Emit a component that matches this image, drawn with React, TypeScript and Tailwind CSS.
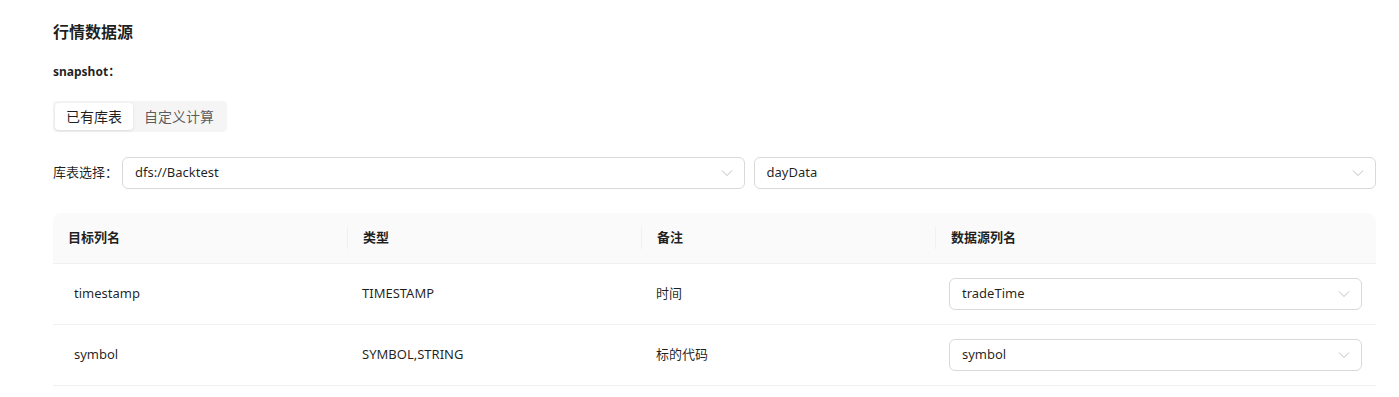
import React from "react";

const font = { fontFamily: '"Noto Sans", "Noto Sans CJK SC", sans-serif' };

function Chevron() {
  return (
    <svg width="12" height="12" viewBox="0 0 12 12" className="shrink-0">
      <polyline points="1,3.5 6,8.5 11,3.5" fill="none" stroke="rgba(0,0,0,0.25)" strokeWidth="1" />
    </svg>
  );
}

function Select({ value, className = "" }: { value: string; className?: string }) {
  return (
    <div
      className={`h-[32px] flex items-center justify-between pl-[12px] pr-[11px] border border-[#d9d9d9] rounded-[6px] bg-white text-[13px] text-[rgba(0,0,0,0.88)] ${className}`}
    >
      <span>{value}</span>
      <Chevron />
    </div>
  );
}

const rows = [
  { name: "timestamp", type: "TIMESTAMP", note: "时间", src: "tradeTime" },
  { name: "symbol", type: "SYMBOL,STRING", note: "标的代码", src: "symbol" },
];

const headers = ["目标列名", "类型", "备注", "数据源列名"];

export default function App() {
  return (
    <div className="min-h-screen bg-white pl-[53px] pr-[23px] pt-[20px]" style={font}>
      <h2 className="text-[16px] leading-[24px] font-bold text-[rgba(0,0,0,0.88)]">行情数据源</h2>
      <div className="mt-[18px] text-[12px] leading-[20px] font-bold text-[rgba(0,0,0,0.88)]">snapshot：</div>

      <div className="mt-[19px] inline-flex p-[2px] rounded-[4px] bg-[#f5f5f5]">
        <div className="h-[27px] px-[11px] flex items-center rounded-[4px] bg-white shadow-[0_1px_2px_rgba(0,0,0,0.06),0_1px_4px_rgba(0,0,0,0.06)] text-[14px] text-[rgba(0,0,0,0.88)]">
          已有库表
        </div>
        <div className="h-[27px] px-[11px] flex items-center text-[14px] text-[rgba(0,0,0,0.65)]">自定义计算</div>
      </div>

      <div className="mt-[25px] flex items-center">
        <span className="w-[69px] text-[13px] text-[rgba(0,0,0,0.88)]">库表选择：</span>
        <div className="flex-1 flex gap-[9px]">
          <Select value="dfs://Backtest" className="flex-1" />
          <Select value="dayData" className="flex-1" />
        </div>
      </div>

      <div className="mt-[24px] text-[13px] text-[rgba(0,0,0,0.88)]">
        <div className="grid grid-cols-[2fr_2fr_2fr_3fr] h-[51px] bg-[#fafafa] border-b border-[#f0f0f0] rounded-t-[8px]">
          {headers.map((h, i) => (
            <div key={h} className="flex items-center font-bold">
              {i > 0 ? <div className="w-px h-[22px] bg-[#f0f0f0]" /> : null}
              <span className={i > 0 ? "ml-[15px]" : "ml-[15px]"}>{h}</span>
            </div>
          ))}
        </div>
        {rows.map((r) => (
          <div key={r.name} className="grid grid-cols-[2fr_2fr_2fr_3fr] h-[61px] border-b border-[#f0f0f0]">
            <div className="flex items-center pl-[21px]">{r.name}</div>
            <div className="flex items-center pl-[15px]">{r.type}</div>
            <div className="flex items-center pl-[15px]">{r.note}</div>
            <div className="flex items-center pl-[14px] pr-[14px]">
              <Select value={r.src} className="w-full" />
            </div>
          </div>
        ))}
      </div>
    </div>
  );
}
